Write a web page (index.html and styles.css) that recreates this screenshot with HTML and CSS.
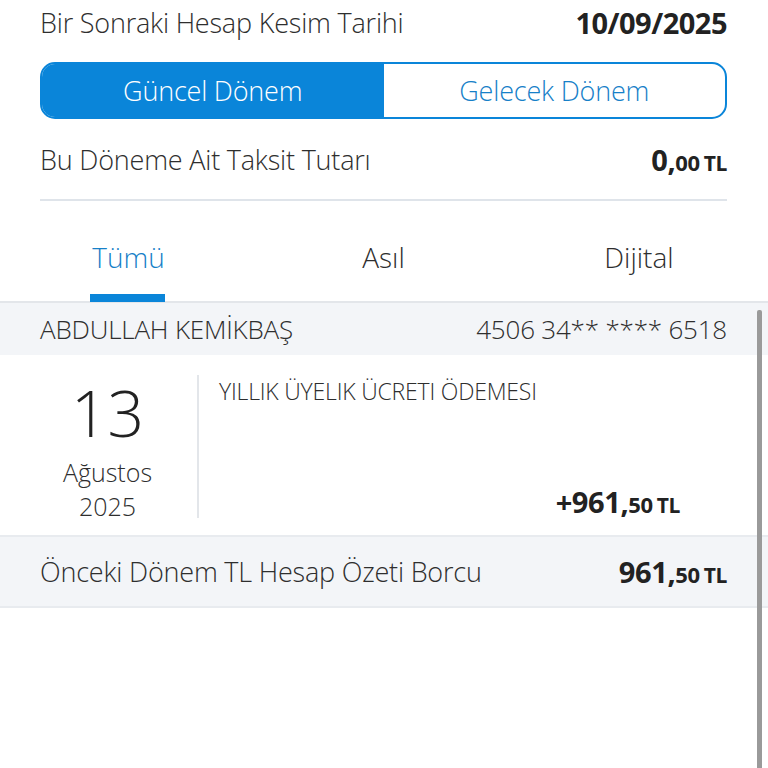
FILE: index.html
```html
<!DOCTYPE html>
<html lang="tr">
<head>
<meta charset="utf-8">
<link rel="stylesheet" href="styles.css">
</head>
<body>
<div class="page">
  <div class="top">
    <div class="row first">
      <span class="label">Bir Sonraki Hesap Kesim Tarihi</span>
      <span class="date">10/09/2025</span>
    </div>
    <div class="segment">
      <div class="seg active">Güncel Dönem</div>
      <div class="seg">Gelecek Dönem</div>
    </div>
    <div class="row second">
      <span class="label">Bu Döneme Ait Taksit Tutarı</span>
      <span class="amount">0,<small>00</small> <small class="cur">TL</small></span>
    </div>
    <div class="divider"></div>
  </div>
  <div class="tabs">
    <div class="tab active">Tümü</div>
    <div class="tab">Asıl</div>
    <div class="tab">Dijital</div>
  </div>
  <div class="list">
    <div class="card-head">
      <span>ABDULLAH KEMİKBAŞ</span>
      <span>4506 34** **** 6518</span>
    </div>
    <div class="tx">
      <div class="tx-date">
        <div class="day">13</div>
        <div class="month">Ağustos</div>
        <div class="year">2025</div>
      </div>
      <div class="tx-body">
        <div class="desc">YILLIK ÜYELIK ÜCRETI ÖDEMESI</div>
        <div class="amount tx-amt">+961,<small>50</small> <small class="cur">TL</small></div>
      </div>
    </div>
    <div class="summary">
      <span>Önceki Dönem TL Hesap Özeti Borcu</span>
      <span class="amount">961,<small>50</small> <small class="cur">TL</small></span>
    </div>
    <div class="scrollbar"></div>
  </div>
</div>
</body>
</html>
```
FILE: styles.css
```css
* { box-sizing: border-box; }
html, body { margin: 0; padding: 0; background: #fff; }
body {
  font-family: "Open Sans", "Noto Sans", sans-serif;
  font-weight: 300;
  color: #2e2e2e;
  width: 768px;
  height: 768px;
  overflow: hidden;
}
.page { display: flex; flex-direction: column; }
.top { padding: 0 41px 0 40px; }
.row {
  display: flex;
  justify-content: space-between;
  align-items: center;
}
.row.first { height: 44px; }
.label { font-size: 27px; letter-spacing: -0.2px; }
.date { font-size: 29px; font-weight: 700; color: #222; letter-spacing: -0.5px; }
.segment {
  margin-top: 18px;
  height: 57px;
  border: 2px solid #0a85d9;
  border-radius: 15px;
  display: flex;
  overflow: hidden;
}
.seg {
  flex: 1;
  display: flex;
  align-items: center;
  justify-content: center;
  font-size: 27px;
  color: #1680c8;
  letter-spacing: -0.2px;
}
.seg.active { background: #0a85d9; color: #fff; }
.row.second { height: 80px; }
.amount { font-size: 29px; font-weight: 700; color: #222; letter-spacing: -0.4px; white-space: nowrap; }
.amount small { font-size: 22px; }
.amount small.cur { font-size: 21px; margin-left: -3px; }
.divider { height: 2px; background: #dfe4ea; }
.tabs {
  display: flex;
  height: 102px;
  border-bottom: 2px solid #e3e6ea;
}
.tab {
  flex: 1;
  display: flex;
  align-items: center;
  justify-content: center;
  font-size: 28px;
  color: #2e2e2e;
  position: relative;
  padding-top: 12px;
}
.tab:first-child { flex: 0 0 257px; }
.tab:last-child { flex: 0 0 258px; }
.tab.active { color: #1680c8; }
.tab.active::after {
  content: "";
  position: absolute;
  left: 90px;
  width: 75px;
  bottom: -1px;
  height: 8px;
  background: #0a85d9;
}
.list { position: relative; display: flex; flex-direction: column; }
.card-head {
  display: flex;
  justify-content: space-between;
  align-items: center;
  height: 52px;
  padding: 0 41px 0 40px;
  background: #f3f5f8;
  font-size: 26px;
  letter-spacing: -0.2px;
}
.tx {
  display: flex;
  align-items: flex-start;
  height: 182px;
  border-bottom: 2px solid #e8ebef;
  padding: 20px 0 14px;
}
.tx-date {
  width: 199px;
  height: 143px;
  border-right: 2px solid #e3e6ea;
  display: flex;
  flex-direction: column;
  align-items: center;
  padding-left: 18px;
}
.day { font-size: 64px; line-height: 88px; height: 88px; margin-top: -6px; color: #222; }
.month { font-size: 25px; line-height: 34px; height: 34px; margin-top: -2px; }
.year { font-size: 25px; line-height: 34px; height: 34px; }
.tx-body {
  flex: 1;
  align-self: stretch;
  display: flex;
  flex-direction: column;
  justify-content: space-between;
  padding: 0 88px 0 20px;
}
.desc { font-size: 23px; letter-spacing: -0.2px; }
.tx-amt { align-self: flex-end; }
.summary {
  display: flex;
  justify-content: space-between;
  align-items: center;
  height: 71px;
  padding: 0 41px 0 40px;
  background: #f3f5f8;
  border-bottom: 2px solid #e8ebef;
  font-size: 27px;
  letter-spacing: -0.2px;
}
.scrollbar {
  position: absolute;
  right: 6px;
  top: 7px;
  width: 5px;
  height: 470px;
  background: #9a9a9a;
  border-radius: 2px;
}
```
